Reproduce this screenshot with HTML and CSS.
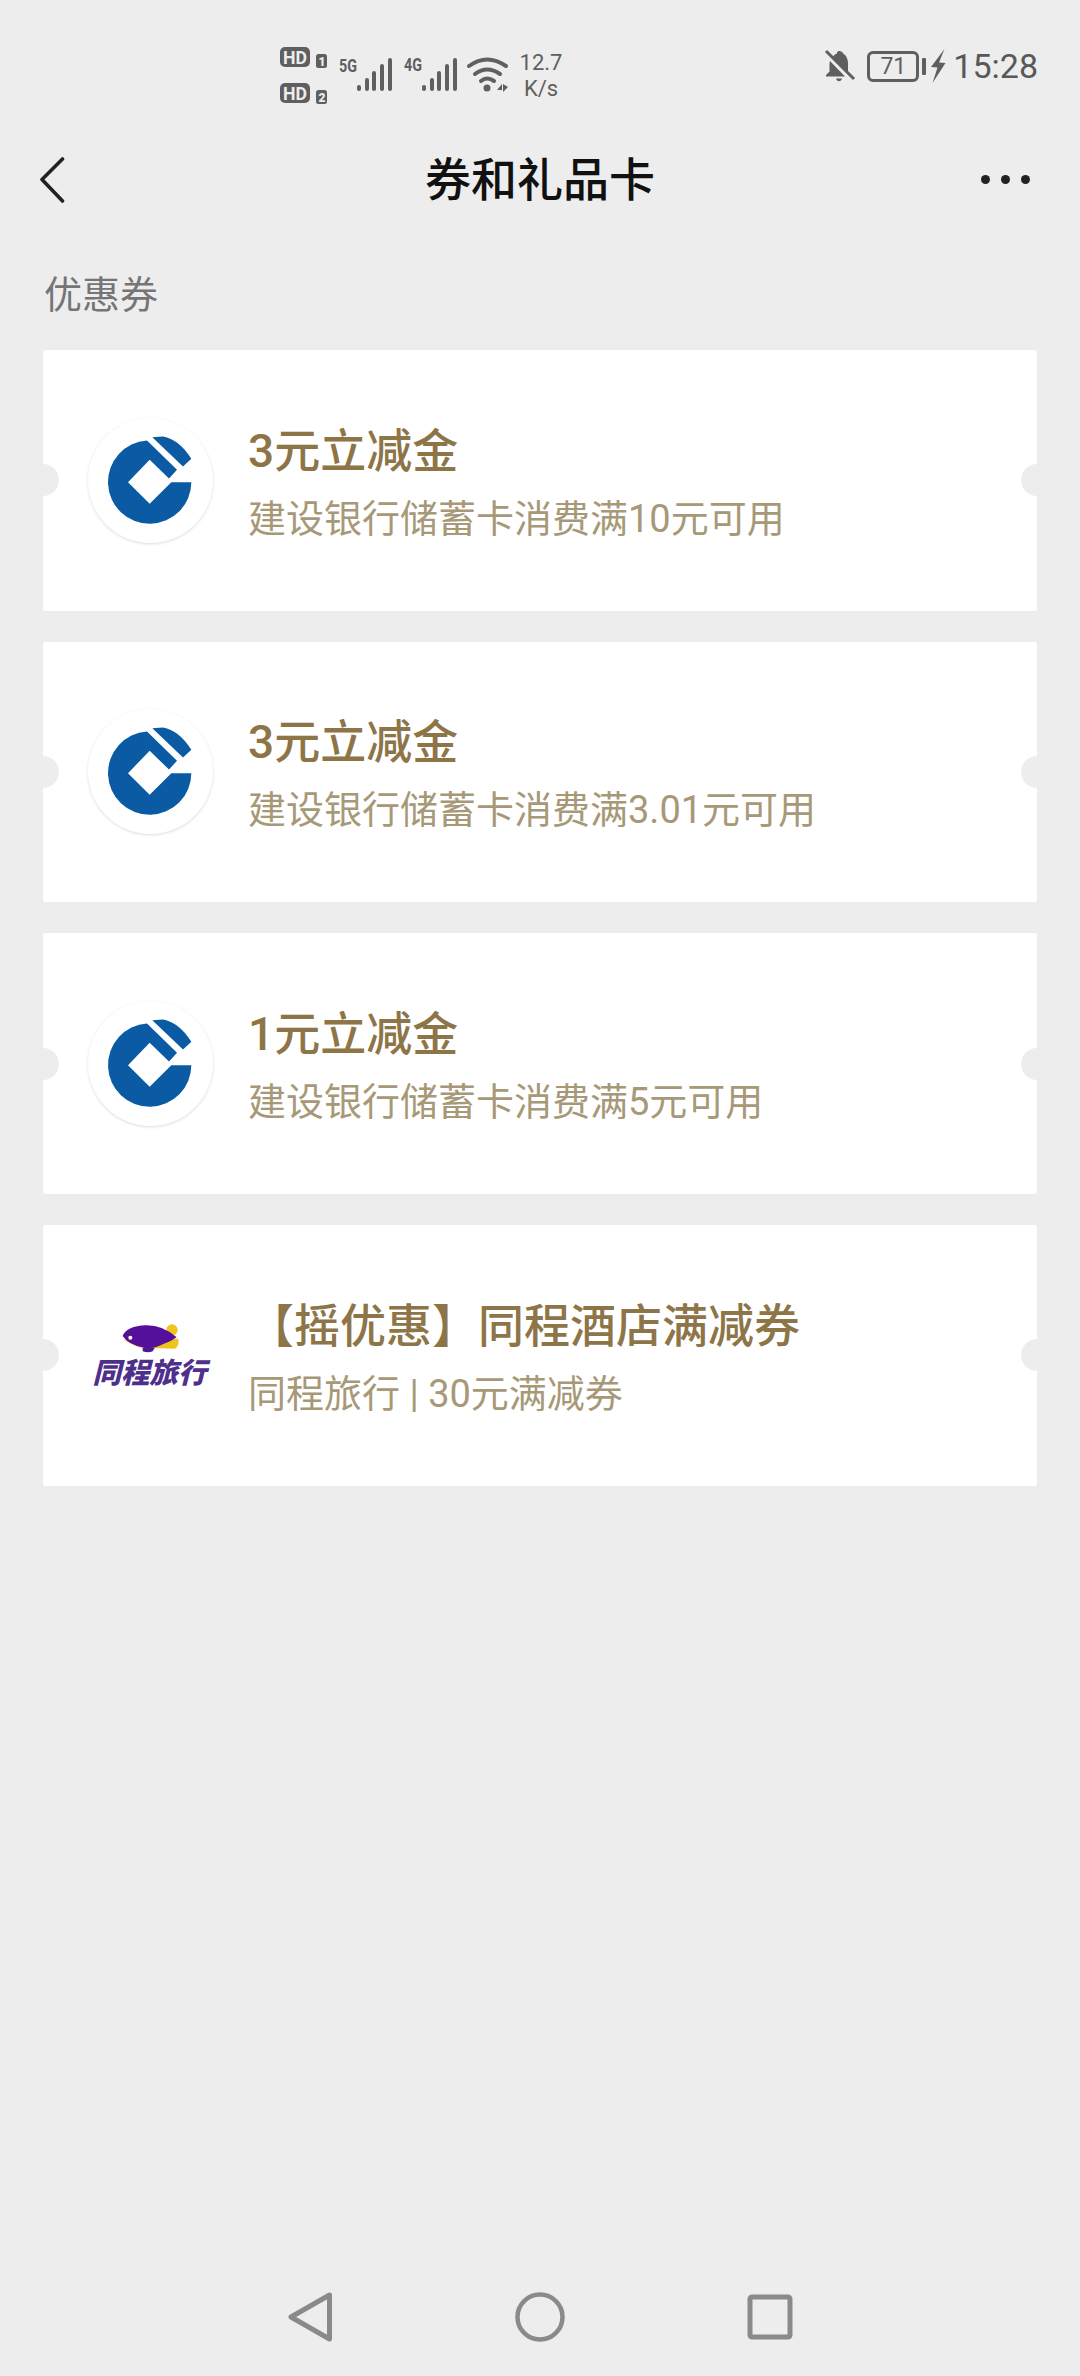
FILE: index.html
```html
<!DOCTYPE html>
<html lang="zh-CN">
<head>
<meta charset="utf-8">
<title>券和礼品卡</title>
<link rel="stylesheet" href="styles.css">
</head>
<body>
<div class="page">
  <header class="status">
    <svg class="status-left" width="290" height="70" viewBox="280 40 290 70">
      <g fill="#5f5f5f">
        <rect x="280" y="47" width="30" height="20" rx="5"/>
        <rect x="316" y="54" width="11" height="14" rx="2.5"/>
        <rect x="280" y="83" width="30" height="20" rx="5"/>
        <rect x="316" y="90" width="11" height="14" rx="2.5"/>
      </g>
      <g class="hd" fill="#ededed">
        <text x="283" y="64" textLength="24" lengthAdjust="spacingAndGlyphs">HD</text>
        <text x="283" y="100" textLength="24" lengthAdjust="spacingAndGlyphs">HD</text>
        <text class="hd-n" x="318.500" y="65.500">1</text>
        <text class="hd-n" x="318.500" y="101.500">2</text>
      </g>
      <g class="net" fill="#5f5f5f">
        <text x="339" y="72" textLength="18" lengthAdjust="spacingAndGlyphs">5G</text>
        <text x="404" y="71" textLength="18" lengthAdjust="spacingAndGlyphs">4G</text>
      </g>
      <g stroke="#5f5f5f" stroke-width="4" stroke-linecap="round">
        <path d="M359 87v2M367 80v9M374 73v16M382 66v23M390 60v29"/>
        <path d="M424 87v2M432 80v9M439 73v16M447 66v23M455 60v29"/>
      </g>
      <g fill="none" stroke="#5f5f5f" stroke-width="4" stroke-linecap="round">
        <path d="M469 66q18-13 37 0"/>
        <path d="M475 74q12-9 25 0"/>
        <path d="M481 81q6-5 13 0"/>
      </g>
      <circle cx="487" cy="88" r="3.500" fill="#5f5f5f"/>
      <path d="M497 90l5-6v6zM503 84l5 3-5 5z" fill="#5f5f5f"/>
      <g class="speed" fill="#5f5f5f" text-anchor="middle">
        <text x="541" y="70">12.7</text>
        <text x="541" y="96">K/s</text>
      </g>
    </svg>
    <div class="status-right">
      <svg class="bell" width="32" height="34" viewBox="0 0 32 34">
        <path d="M15 2c-1.500 0-2 1-2 2.500-2.500 1-4 2.500-5 4.500L24 25V14c0-4-2-8-5-9.500C19 3 17 2 15 2zM6 12c-.300 1-.500 1.800-.500 3v7.500L2 26v1.500h19z" fill="#5f5f5f"/>
        <path d="M12 29.500h6c-.500 1.800-1.500 2.700-3 2.700s-2.500-.900-3-2.700z" fill="#5f5f5f"/>
        <path d="M2 2l28 28" stroke="#5f5f5f" stroke-width="3"/>
      </svg>
      <div class="battery"><span>71</span></div>
      <i class="battery-cap"></i>
      <svg class="bolt" width="15" height="34" viewBox="0 0 15 34">
        <path d="M13.500 0L0 18l6.500.500L1.500 34l13-20-6.500-.500z" fill="#5f5f5f"/>
      </svg>
      <span class="time">15:28</span>
    </div>
  </header>

  <nav class="topbar">
    <svg class="back" width="25" height="46" viewBox="0 0 25 46">
      <path d="M22.500 2L2 22.500 22.500 44" fill="none" stroke="#222" stroke-width="3.600" stroke-linecap="round" stroke-linejoin="round"/>
    </svg>
    <h1 class="title">券和礼品卡</h1>
    <div class="more"><i></i><i></i><i></i></div>
  </nav>

  <h2 class="section">优惠券</h2>

  <main class="cards">
    <article class="card">
      <div class="logo logo-round">
        <svg width="125" height="127" viewBox="205 230 375 380">
          <path d="M515 425A125 125 0 1 1 382 300L472 388 448 414 390 358 325 425 390 490 455 425Z" fill="#0a5ba3"/>
          <path d="M398 290L430 288Q478 296 515 355L490 378Z" fill="#0a5ba3"/>
        </svg>
      </div>
      <div class="info">
        <div class="name">3元立减金</div>
        <div class="desc">建设银行储蓄卡消费满10元可用</div>
      </div>
    </article>
    <article class="card">
      <div class="logo logo-round">
        <svg width="125" height="127" viewBox="205 230 375 380">
          <path d="M515 425A125 125 0 1 1 382 300L472 388 448 414 390 358 325 425 390 490 455 425Z" fill="#0a5ba3"/>
          <path d="M398 290L430 288Q478 296 515 355L490 378Z" fill="#0a5ba3"/>
        </svg>
      </div>
      <div class="info">
        <div class="name">3元立减金</div>
        <div class="desc">建设银行储蓄卡消费满3.01元可用</div>
      </div>
    </article>
    <article class="card">
      <div class="logo logo-round">
        <svg width="125" height="127" viewBox="205 230 375 380">
          <path d="M515 425A125 125 0 1 1 382 300L472 388 448 414 390 358 325 425 390 490 455 425Z" fill="#0a5ba3"/>
          <path d="M398 290L430 288Q478 296 515 355L490 378Z" fill="#0a5ba3"/>
        </svg>
      </div>
      <div class="info">
        <div class="name">1元立减金</div>
        <div class="desc">建设银行储蓄卡消费满5元可用</div>
      </div>
    </article>
    <article class="card">
      <div class="logo logo-tc">
        <svg class="blimp" width="60" height="30" viewBox="303 312 180 90">
          <circle cx="456" cy="330" r="17" fill="#eec51d"/>
          <path d="M310 358q40 28 75 26l80 2q14-10 10-30l-40 4-80 10z" fill="#eec51d"/>
          <path d="M308 348q12-30 70-32 50-1 92 36-18 14-40 20-30 16-56 12-50-10-66-36z" fill="#54109a"/>
          <path d="M368 384h36l-6 10q-14 6-30 0z" fill="#4a1a8c"/>
          <circle cx="331" cy="353" r="6" fill="#fff"/>
        </svg>
        <span class="tc-name">同程旅行</span>
      </div>
      <div class="info">
        <div class="name">【摇优惠】同程酒店满减券</div>
        <div class="desc">同程旅行 | 30元满减券</div>
      </div>
    </article>
  </main>

  <footer class="sysnav">
    <svg width="60" height="60" viewBox="0 0 60 60">
      <path d="M49.500 8L11 30l38.500 22z" fill="none" stroke="#8a8a8a" stroke-width="5" stroke-linejoin="round"/>
    </svg>
    <svg width="60" height="60" viewBox="0 0 60 60">
      <circle cx="30" cy="30" r="22.500" fill="none" stroke="#8a8a8a" stroke-width="4.500"/>
    </svg>
    <svg width="60" height="60" viewBox="0 0 60 60">
      <rect x="10" y="10" width="40" height="40" rx="2" fill="none" stroke="#8a8a8a" stroke-width="5"/>
    </svg>
  </footer>
</div>
</body>
</html>
```
FILE: styles.css
```css
* { box-sizing: border-box; }
html, body { margin: 0; padding: 0; }
body {
  background: #ededed;
  font-family: Roboto, "Noto Sans CJK SC", sans-serif;
}
.page {
  width: 1080px;
  height: 2376px;
  display: flex;
  flex-direction: column;
  overflow: hidden;
}
.status {
  height: 120px;
  flex: none;
  display: flex;
  justify-content: space-between;
  padding: 40px 42px 10px 280px;
}
.status-left { display: block; }
.status-left text { font-family: Roboto, sans-serif; }
.hd text { font-size: 19px; font-weight: 700; }
.hd .hd-n { font-size: 12px; font-weight: 900; }
.net text { font-size: 19px; font-weight: 700; }
.speed text { font-size: 22px; }
.status-right {
  display: flex;
  align-items: center;
  height: 52px;
}
.bell { margin-right: 11px; }
.battery {
  width: 52px;
  height: 31px;
  border: 3px solid #5f5f5f;
  border-radius: 6px;
  display: flex;
  align-items: center;
  justify-content: center;
  font: 400 23px/1 Roboto, sans-serif;
  color: #5f5f5f;
}
.battery-cap {
  width: 4px;
  height: 17px;
  margin-left: 3px;
  background: #5f5f5f;
  border-radius: 1px;
}
.bolt { margin-left: 5px; margin-right: 7px; }
.time {
  font: 400 34px/1 Roboto, sans-serif;
  color: #585858;
}
.topbar {
  position: relative;
  height: 120px;
  flex: none;
  display: flex;
  align-items: center;
  justify-content: space-between;
  padding: 0 50px 0 40px;
}
.title {
  position: absolute;
  left: 0;
  right: 0;
  top: 30px;
  margin: 0;
  text-align: center;
  font-size: 46px;
  line-height: 60px;
  font-weight: 500;
  color: #111;
}
.more { display: flex; gap: 11px; margin-top: -2px; }
.more i { width: 9px; height: 9px; border-radius: 50%; background: #222; }
.section {
  margin: 30px 0 30px 44px;
  font-size: 38px;
  line-height: 50px;
  font-weight: 400;
  color: #757575;
}
.cards {
  display: flex;
  flex-direction: column;
  gap: 31px;
  padding: 0 43px;
}
.card {
  position: relative;
  height: 260.670px;
  background: #fff;
  border-radius: 3px;
  display: flex;
  align-items: center;
  padding-left: 45px;
  gap: 35px;
}
.card::before, .card::after {
  content: "";
  position: absolute;
  top: 50%;
  width: 32px;
  height: 32px;
  margin-top: -16px;
  border-radius: 50%;
  background: #ededed;
}
.card::before { left: -16px; }
.card::after { right: -16px; }
.logo { width: 125px; flex: none; }
.logo-round {
  height: 125px;
  border-radius: 50%;
  box-shadow: 0 1px 3px rgba(0, 0, 0, .14);
  display: flex;
  align-items: center;
  justify-content: center;
  overflow: hidden;
}
.logo-round svg { display: block; }
.logo-tc {
  display: flex;
  flex-direction: column;
  align-items: center;
}
.blimp { display: block; }
.tc-name {
  width: 125px;
  margin-top: 1px;
  margin-left: -2px;
  text-align: center;
  font-family: "Noto Sans CJK SC", sans-serif;
  font-size: 28.500px;
  line-height: 31px;
  font-weight: 900;
  font-style: italic;
  color: #4f2f8c;
  white-space: nowrap;
}
.info { margin-top: 9px; display: flex; flex-direction: column; gap: 8px; }
.name {
  font-size: 46px;
  line-height: 60px;
  font-weight: 500;
  color: #8e7548;
  white-space: nowrap;
}
.desc {
  font-size: 38px;
  line-height: 60px;
  color: #a79977;
  white-space: nowrap;
}
.sysnav {
  margin-top: auto;
  height: 118px;
  flex: none;
  display: flex;
  align-items: center;
  justify-content: center;
  gap: 170px;
}
.sysnav svg { display: block; }
```
